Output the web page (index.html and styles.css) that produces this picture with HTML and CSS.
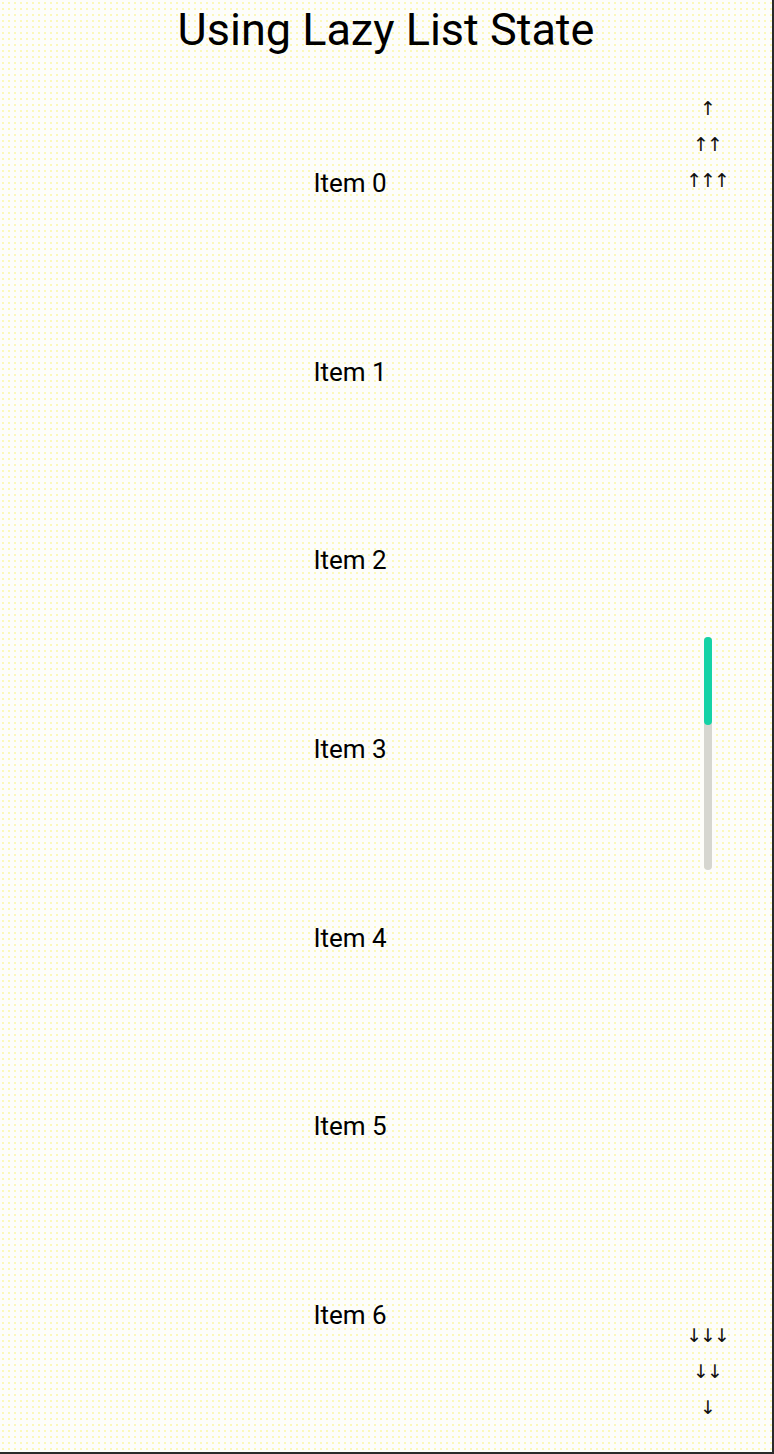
FILE: index.html
```html
<!DOCTYPE html>
<html>
<head>
<meta charset="utf-8">
<link rel="stylesheet" href="styles.css">
</head>
<body>
<div class="screen">
  <h1 class="title">Using Lazy List State</h1>
  <div class="content">
    <div class="list">
      <div class="item">Item 0</div>
      <div class="item">Item 1</div>
      <div class="item">Item 2</div>
      <div class="item">Item 3</div>
      <div class="item">Item 4</div>
      <div class="item">Item 5</div>
      <div class="item">Item 6</div>
    </div>
    <div class="side">
      <div class="arrows">
        <div class="arrow-row">↑</div>
        <div class="arrow-row">↑↑</div>
        <div class="arrow-row">↑↑↑</div>
      </div>
      <div class="track">
        <div class="thumb"></div>
      </div>
      <div class="arrows">
        <div class="arrow-row">↓↓↓</div>
        <div class="arrow-row">↓↓</div>
        <div class="arrow-row">↓</div>
      </div>
    </div>
  </div>
</div>
</body>
</html>
```

FILE: styles.css
```css
html, body {
  margin: 0;
  padding: 0;
  background: #ffffff;
}
.screen {
  width: 772px;
  height: 1452px;
  border-right: 2px solid #2a2a2a;
  border-bottom: 2px solid #2a2a2a;
  background-color: #fdfdfa;
  background-image: radial-gradient(circle, #fbf8b8 0.7px, transparent 1px);
  background-size: 6px 6px;
  display: flex;
  flex-direction: column;
  overflow: hidden;
  font-family: Roboto, "Liberation Sans", sans-serif;
  color: #000;
}
.title {
  margin: 0;
  height: 60px;
  font-size: 45px;
  font-weight: 400;
  line-height: 60px;
  text-align: center;
  flex: none;
}
.content {
  flex: 1;
  display: flex;
  min-height: 0;
}
.list {
  width: 680px;
  padding-left: 10px;
  padding-top: 29px;
  overflow: hidden;
}
.item {
  height: 188.6px;
  display: flex;
  align-items: center;
  justify-content: center;
  font-size: 26px;
}
.side {
  width: 36px;
  padding: 31px 46px 26px 0;
  display: flex;
  flex-direction: column;
  justify-content: space-between;
  align-items: center;
}
.arrows {
  display: flex;
  flex-direction: column;
}
.arrow-row {
  height: 36px;
  line-height: 36px;
  text-align: center;
  font-family: Roboto, "DejaVu Sans", sans-serif;
  font-size: 19px;
  letter-spacing: -2px;
  text-indent: -2px;
  color: #111;
  white-space: nowrap;
}
.track {
  width: 8px;
  height: 233px;
  background: #d6d6d0;
  border-radius: 4px;
  margin-top: -10px;
}
.thumb {
  width: 8px;
  height: 88px;
  background: #14d2a6;
  border-radius: 4px;
}
```
